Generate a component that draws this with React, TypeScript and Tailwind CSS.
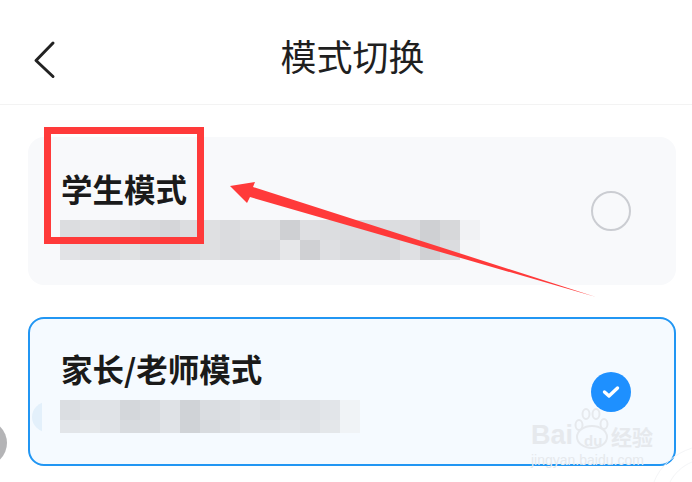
const cjk = "font-['Noto_Sans_CJK_SC','Liberation_Sans',sans-serif]";

// Mosaic rows that blur the description text
const studentRows = [
  ['bg-[#dcdde0]', 'bg-[#dfe0e2]', 'bg-[#dddee1]', 'bg-[#dbdcdf]', 'bg-[#d8d9dc]', 'bg-[#d5d6d9]', 'bg-[#dcdde0]', 'bg-[#dfe0e2]', 'bg-[#dbdcdf]', 'bg-[#dfe0e2]', 'bg-[#dfe0e2]', 'bg-[#cfd0d3]', 'bg-[#dedfe2]', 'bg-[#dcdde0]', 'bg-[#dbdcdf]', 'bg-[#dadbde]', 'bg-[#dcdde0]', 'bg-[#dbdcdf]', 'bg-[#cfd0d3]', 'bg-[#d7d8da]', 'bg-[#f1f2f4]'],
  ['bg-[#e2e3e6]', 'bg-[#dedfe2]', 'bg-[#dcdde0]', 'bg-[#e0e1e3]', 'bg-[#d9dadd]', 'bg-[#d8d9dc]', 'bg-[#dcdde0]', 'bg-[#dfe0e2]', 'bg-[#dbdcdf]', 'bg-[#dcdde0]', 'bg-[#dadbde]', 'bg-[#e6e7e9]', 'bg-[#d0d1d4]', 'bg-[#dedfe2]', 'bg-[#d9dadd]', 'bg-[#d9dadd]', 'bg-[#d7d8db]', 'bg-[#dfe0e3]', 'bg-[#d0d1d4]', 'bg-[#dbdcdf]', 'bg-[#f5f6f8]'],
];

const parentRows = [
  ['bg-[#dbdee2]', 'bg-[#dfe2e6]', 'bg-[#e0e3e7]', 'bg-[#d4d7db]', 'bg-[#d8dbdf]', 'bg-[#dfe2e6]', 'bg-[#d0d3d7]', 'bg-[#dadde1]', 'bg-[#dcdfe3]', 'bg-[#e0e3e7]', 'bg-[#dcdfe3]', 'bg-[#e0e3e7]', 'bg-[#dfe2e6]', 'bg-[#e2e5e9]', 'bg-[#f0f3f6]'],
  ['bg-[#e2e5e9]', 'bg-[#e4e7ea]', 'bg-[#e0e3e7]', 'bg-[#d8dbdf]', 'bg-[#d9dce0]', 'bg-[#e0e3e7]', 'bg-[#d0d3d7]', 'bg-[#d8dbdf]', 'bg-[#dcdfe3]', 'bg-[#e0e3e7]', 'bg-[#e0e3e7]', 'bg-[#e2e5e9]', 'bg-[#dfe2e6]', 'bg-[#e4e7ea]', 'bg-[#f0f3f6]'],
];

function Mosaic({ rows, heights }: { rows: string[][]; heights: string[] }) {
  return (
    <div className="flex flex-col">
      {rows.map((row, i) => (
        <div key={i} className={`flex ${heights[i]}`}>
          {row.map((shade, j) => (
            <div key={j} className={`w-5 ${shade}`} />
          ))}
        </div>
      ))}
    </div>
  );
}

export default function App() {
  return (
    <div className={`relative w-[692px] h-[482px] overflow-hidden bg-white ${cjk}`}>
      {/* Header */}
      <header className="relative flex h-[105px] items-center justify-center border-b border-[#f3f3f3] pl-[13px] pt-[6px]">
        <svg className="absolute left-[30px] top-[38px]" width="30" height="44" viewBox="0 0 30 44" fill="none">
          <polyline
            points="23,5 6,22.5 23,38.5"
            stroke="#222"
            strokeWidth="3"
            strokeLinecap="round"
            strokeLinejoin="round"
          />
        </svg>
        <h1 className="text-[36px] leading-none font-normal text-[#1f1f1f]">模式切换</h1>
      </header>

      <main className="flex flex-col gap-8 pl-7 pr-4 pt-8">
        {/* Student mode */}
        <section className="flex h-[148px] items-center justify-between rounded-[16px] bg-[#f8f9fb] pl-8 pr-[45px]">
          <div className="flex flex-col">
            <h2 className="h-[83px] pt-[32px] pl-[1px] text-[31.5px] leading-[38px] font-bold text-[#1a1a1a]">学生模式</h2>
            <Mosaic rows={studentRows} heights={['h-5', 'h-5']} />
            <div className="h-[25px]" />
          </div>
          <span className="h-10 w-10 rounded-full border-2 border-[#cbcdd2]" />
        </section>

        {/* Parent / teacher mode */}
        <section className="flex h-[149px] items-center justify-between rounded-[16px] border-2 border-[#2196f3] bg-[#f5faff] pl-[30px] pr-[43px]">
          <div className="flex flex-col">
            <h2 className="h-[81px] pt-[30px] pl-[1px] text-[31.5px] leading-[38px] font-bold text-[#1a1a1a]">家长/老师模式</h2>
            <Mosaic rows={parentRows} heights={['h-5', 'h-[13px]']} />
            <div className="h-[31px]" />
          </div>
          <span className="relative z-10 flex h-10 w-10 items-center justify-center rounded-full bg-[#1e90ff]">
            <svg width="18" height="14" viewBox="0 0 18 14" fill="none">
              <polyline
                points="2.5,7 7,11 15.5,3"
                stroke="#fff"
                strokeWidth="3.4"
                strokeLinecap="round"
                strokeLinejoin="round"
              />
            </svg>
          </span>
        </section>
      </main>

      {/* Red annotation box */}
      <div className="absolute left-[44px] top-[127px] h-[117px] w-[160px] border-[7px] border-[#ff3a3a]" />

      {/* Red annotation arrow */}
      <svg className="absolute inset-0" width="692" height="482" viewBox="0 0 692 482">
        <polygon points="230,186 255,182 253,187 596,297 250,197 247,203" fill="#ff3a3a" />
      </svg>

      {/* Left edge leftovers */}
      <div className="absolute left-[-39px] top-[420px] h-[46px] w-[46px] rounded-full bg-[#b4b4b6]" />
      <div className="absolute left-[32px] top-[402px] h-[30px] w-[30px] rounded-l-full bg-[#e3f0fb] [clip-path:inset(0_20px_0_0)]" />

      {/* Baidu watermark */}
      <div className="absolute left-[531px] top-[420px] w-[140px] font-['Liberation_Sans',sans-serif] text-[#e6e9ed]">
        <div className="flex h-[30px] items-end text-[27px] leading-[30px] font-bold">
          <span>Bai</span>
          <span className="relative h-[30px] w-[38px]">
            <svg className="absolute left-0 top-[-13px]" width="38" height="44" viewBox="0 0 38 44" fill="none" stroke="#e6e9ed" strokeWidth="2">
              <ellipse cx="6" cy="18" rx="3.5" ry="5" />
              <ellipse cx="13" cy="7" rx="3.5" ry="5" />
              <ellipse cx="23" cy="7" rx="3.5" ry="5" />
              <ellipse cx="31" cy="17" rx="3.5" ry="5" />
              <ellipse cx="19" cy="30" rx="15" ry="11" />
            </svg>
            <span className="absolute left-[11px] top-[12px] text-[15px] leading-[18px] text-[#e6e9ed]">du</span>
          </span>
          <span className={`text-[21px] leading-[28px] ${cjk}`}>经验</span>
        </div>
        <div className="mt-[2px] text-[14px] leading-[16px]">jingyan.baidu.com</div>
      </div>

      {/* Faint watermark arcs in the corner */}
      <svg className="absolute bottom-0 right-0" width="40" height="36" viewBox="0 0 40 36" fill="none" stroke="#f4f5f7" strokeWidth="1">
        <path d="M2 36 C8 20 22 8 40 2" />
        <path d="M18 36 C22 28 30 20 40 16" />
      </svg>
    </div>
  );
}
